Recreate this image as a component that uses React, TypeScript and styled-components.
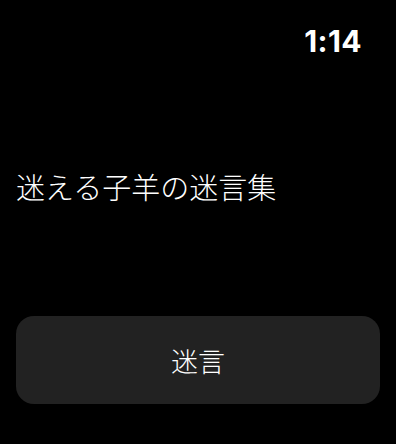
import React from 'react';
import styled, { createGlobalStyle } from 'styled-components';

const GlobalStyle = createGlobalStyle`
  html, body {
    margin: 0;
    padding: 0;
    background: #000;
  }
  body {
    font-family: "Noto Sans CJK JP", "Noto Sans", sans-serif;
    color: #fff;
  }
`;

const Screen = styled.div`
  width: 396px;
  height: 444px;
  background: #000;
  display: flex;
  flex-direction: column;
  box-sizing: border-box;
  padding: 0 16px 40px 16px;
`;

const StatusBar = styled.div`
  display: flex;
  justify-content: flex-end;
  padding: 23px 18px 0 0;
  height: 36px;
`;

const Clock = styled.span`
  font-family: Inter, "Liberation Sans", sans-serif;
  font-weight: 700;
  font-size: 30px;
  line-height: 36px;
  letter-spacing: 0.4px;
`;

const Body = styled.div`
  flex: 1;
  display: flex;
  align-items: center;
  padding-bottom: 4px;
`;

const Title = styled.h1`
  margin: 0;
  font-size: 29px;
  font-weight: 300;
  line-height: 40px;
`;

const Button = styled.button`
  height: 88px;
  width: 100%;
  border: none;
  border-radius: 18px;
  background: #222222;
  color: #fff;
  font-family: "Noto Sans CJK JP", sans-serif;
  font-weight: 300;
  font-size: 27px;
  cursor: pointer;
`;

export default function App() {
  return (
    <>
      <GlobalStyle />
      <Screen>
        <StatusBar>
          <Clock>1:14</Clock>
        </StatusBar>
        <Body>
          <Title>迷える子羊の迷言集</Title>
        </Body>
        <Button>迷言</Button>
      </Screen>
    </>
  );
}
